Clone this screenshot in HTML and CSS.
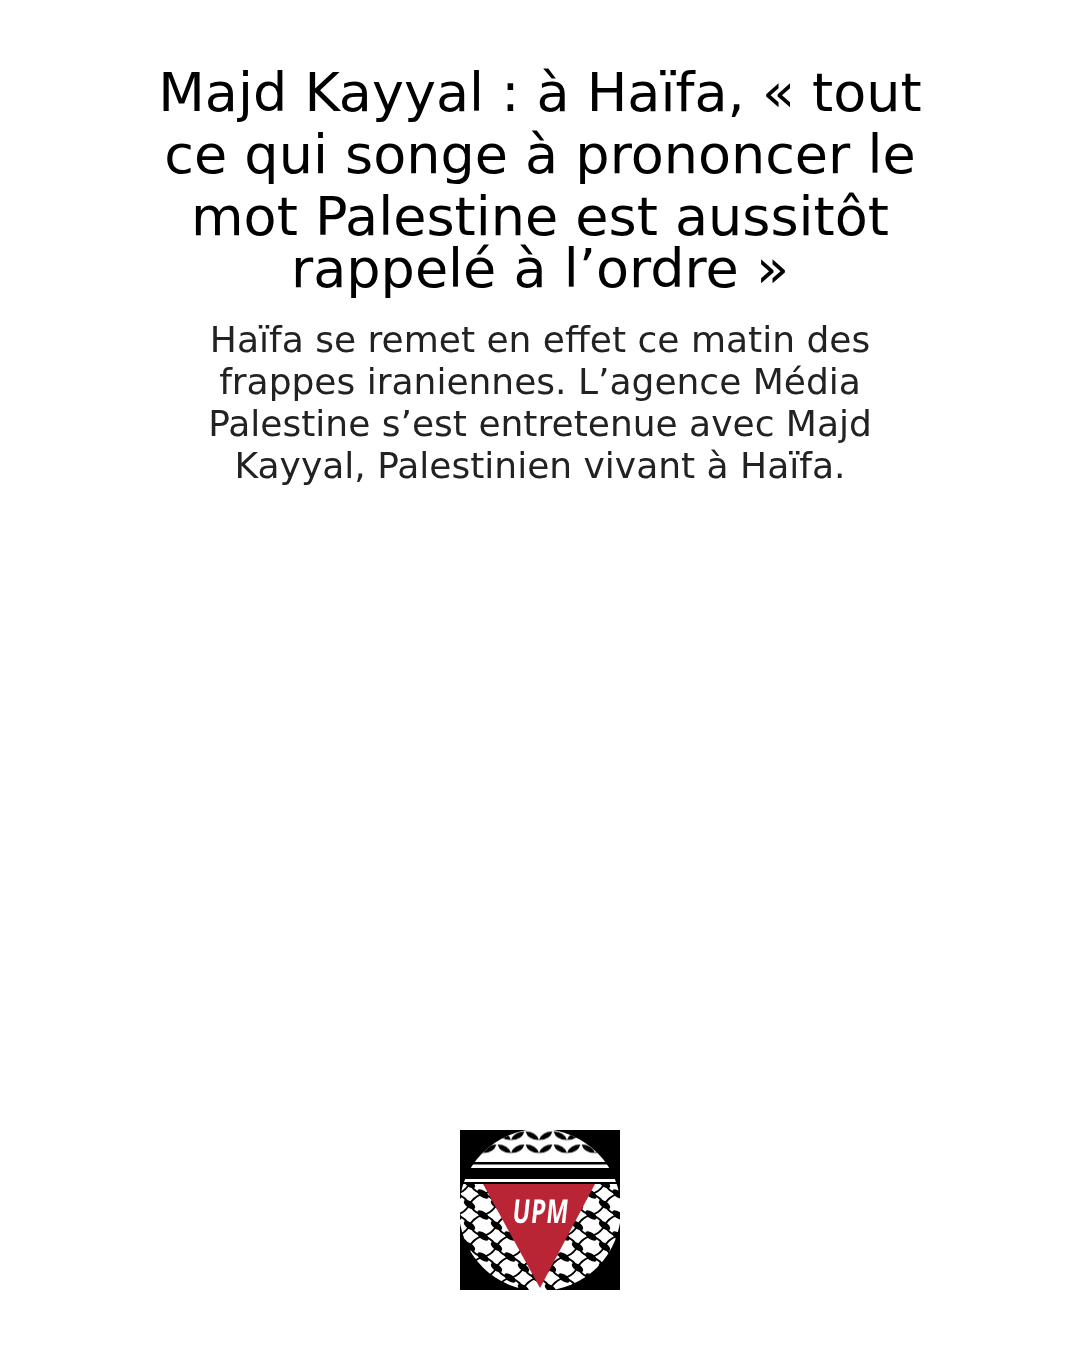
FILE: index.html
```html
<!DOCTYPE html>
<html lang="fr">
<head>
<meta charset="utf-8">
<title>Majd Kayyal</title>
<link rel="stylesheet" href="styles.css">
</head>
<body>
<main class="page">
  <header class="intro">
    <h1 class="title">Majd Kayyal : à Haïfa, « tout ce qui songe à prononcer le mot Palestine est aussitôt<span class="title-end">rappelé à l’ordre »</span></h1>
    <p class="lead">Haïfa se remet en effet ce matin des frappes iraniennes. L’agence Média Palestine s’est entretenue avec Majd Kayyal, Palestinien vivant à Haïfa.</p>
  </header>
  <svg class="logo" viewBox="0 0 160 160" role="img" aria-label="UPM">
    <defs>
      <clipPath id="disc"><circle cx="80" cy="80" r="81"/></clipPath>
      <pattern id="kef" width="27" height="21" patternUnits="userSpaceOnUse" x="23" y="85">
        <rect width="27" height="21" fill="#fff"/>
        <g fill="none" stroke="#000" stroke-width="1.8">
          <path d="M0 0Q9 2 13.5 10.5Q18 19 27 21"/>
          <path d="M27 0Q18 2 13.5 10.5Q9 19 0 21"/>
        </g>
        <g fill="#000">
          <ellipse cx="13.5" cy="10.5" rx="6.6" ry="3.3" transform="rotate(35 13.5 10.5)"/>
          <ellipse cx="0" cy="0" rx="6.6" ry="3.3" transform="rotate(35)"/>
          <ellipse cx="27" cy="0" rx="6.6" ry="3.3" transform="rotate(35 27 0)"/>
          <ellipse cx="0" cy="21" rx="6.6" ry="3.3" transform="rotate(35 0 21)"/>
          <ellipse cx="27" cy="21" rx="6.6" ry="3.3" transform="rotate(35 27 21)"/>
        </g>
      </pattern>
      <pattern id="wave" width="28" height="13" patternUnits="userSpaceOnUse" x="9" y="1.5">
        <path d="M.6 0Q11 0 14 8.5Q3 8.5 .6 0Z" fill="#000"/>
        <path d="M27.4 0Q17 0 14 8.5Q25 8.5 27.4 0Z" fill="#000"/>
      </pattern>
    </defs>
    <rect class="logo-bg" width="160" height="160"/>
    <g class="logo-art">
      <g clip-path="url(#disc)">
        <rect class="white" width="160" height="32"/>
        <rect width="160" height="24" fill="url(#wave)"/>
        <rect class="white" y="34.5" width="160" height="3.5"/>
        <rect class="white" y="49" width="160" height="3"/>
        <rect y="54" width="160" height="106" fill="url(#kef)"/>
      </g>
      <path class="red" d="M23 54H135L80 158Z"/>
      <text class="upm" transform="translate(51.5 93) skewX(-6) scale(.71 1)">UPM</text>
    </g>
  </svg>
</main>
</body>
</html>
```
FILE: styles.css
```css
html, body {
  margin: 0;
  padding: 0;
  background: #fff;
}
.page {
  height: 1350px;
  box-sizing: border-box;
  padding: 62px 0 60px;
  display: flex;
  flex-direction: column;
  align-items: center;
  font-family: "DejaVu Sans", sans-serif;
  overflow: hidden;
}
.intro {
  width: 800px;
  text-align: center;
  opacity: .999;
}
.title {
  margin: 0;
  font-size: 54px;
  line-height: 62px;
  font-weight: 400;
  color: #000;
}
.title-end {
  display: block;
  line-height: 52px;
  margin-top: -5px;
}
.lead {
  width: 680px;
  margin: 24px auto 0;
  font-size: 36px;
  line-height: 42px;
  color: #222;
}
.logo {
  display: block;
  width: 160px;
  height: 160px;
  margin-top: auto;
}
.logo-art { filter: blur(.35px); }
.logo-bg { fill: #000; }
.white { fill: #fff; }
.red { fill: #b92535; }
.upm {
  font-family: "Open Sans", sans-serif;
  font-size: 33px;
  font-weight: 700;
  letter-spacing: 1px;
  fill: #fff;
}
```
